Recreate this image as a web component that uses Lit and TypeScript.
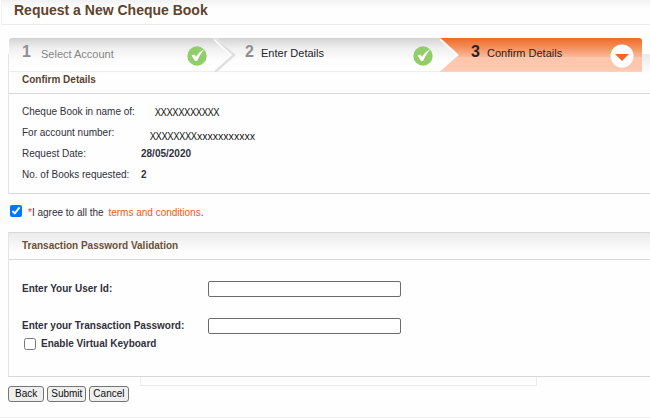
import { LitElement, html, css, svg } from "lit";
import { customElement, property, state } from "lit/decorators.js";

type StepState = "done" | "open" | "current";

@customElement("wizard-step")
class WizardStep extends LitElement {
  @property({ type: Number }) number = 1;
  @property() label = "";
  @property({ reflect: true }) status: StepState = "open";
  @property({ type: Boolean }) first = false;

  static styles = css`
    :host {
      display: flex;
      align-items: center;
      height: 34px;
      background: linear-gradient(#d2d2d2, #f0f0f0 30%, #fdfdfd 65%, #ffffff);
      box-shadow: inset 0 -1px #eeeeee;
      color: #24242c;
    }
    :host([status="done"]) {
      color: #868686;
      border-radius: 3px 0 0 0;
    }
    :host([status="current"]) {
      background: linear-gradient(#ef6a28, #f38f5c 28%, #f9b898 55%, #fdc6ac 57%, #fdc8ae 92%, #fbd5c4);
      border-radius: 0 3px 0 0;
      box-shadow: none;
    }
    .edge {
      flex: none;
      width: 22px;
      height: 34px;
    }
    .number {
      flex: none;
      width: 16px;
      margin: 0 0 6px 9px;
      font-size: 16px;
      line-height: 18px;
      font-weight: bold;
      color: #8f8f93;
    }
    .first {
      margin-left: 13px;
      width: 19px;
    }
    :host([status="current"]) .number {
      color: #2b2024;
    }
    .label {
      flex: 1;
      font-size: 11px;
      line-height: 14px;
      margin-bottom: 5px;
      white-space: nowrap;
    }
    .first + .label {
      margin-bottom: 3px;
    }
    .icon {
      flex: none;
      width: 24px;
      height: 24px;
      margin: 2px 5px 0 0;
    }
    :host([status="current"]) .icon {
      margin-right: 8px;
    }
  `;

  render() {
    const current = this.status === "current";
    const tail = current ? "#fefefe" : "#e0e0e0";
    return html`
      ${this.first
        ? ""
        : html`<svg class="edge" viewBox="0 0 22 34" aria-hidden="true">
            <defs>
              <linearGradient id="g" x2="0" y2="1">
                <stop offset="0" stop-color="#d2d2d2" />
                <stop offset=".3" stop-color="#f0f0f0" />
                <stop offset=".65" stop-color="#fdfdfd" />
                <stop offset="1" stop-color="#ffffff" />
              </linearGradient>
            </defs>
            <path d="M-2 0L18 17L-2 34Z" fill="url(#g)" />
            ${current
              ? svg`<path d="M-1 0L18 17L-1 34" fill="none" stroke=${tail} stroke-width="2" />
                  <path d="M0 0L19 17L0 34" fill="none" stroke="#d9a183" stroke-opacity=".5" />`
              : svg`<path d="M-1 -1L19 17L-1 35" fill="none" stroke="#fefefe" stroke-width="4" />
                  <path d="M0 -1L20 17L0 35" fill="none" stroke=${tail} stroke-width="2.500" />`}
          </svg>`}
      <span class="number ${this.first ? "first" : ""}">${this.number}</span>
      <span class="label">${this.label}</span>
      <svg class="icon" viewBox="0 0 24 24" aria-hidden="true">
        ${current
          ? svg`<circle cx="12" cy="12" r="11.5" fill="#fff" />
              <path d="M5 10H19L12 17Z" fill="#f0652a" />`
          : svg`<circle cx="12" cy="12" r="9.7" fill="#8fce68" />
              <path d="M6.5 11.5L9.5 10.5L11 13C13 9.500 16 6.500 19.500 5C16.500 8.500 14 12.500 12 17H10Z" fill="#fff" />`}
      </svg>
    `;
  }
}

@customElement("app-root")
class AppRoot extends LitElement {
  @state() private agreed = true;

  static styles = css`
    :host {
      display: block;
      overflow: hidden;
      background: #fefefe;
      color: #30303c;
      font: 10px/14px "Liberation Sans", Arial, sans-serif;
    }
    .page {
      border-bottom: 1px solid #ececec;
      padding-bottom: 15px;
    }
    .title {
      margin: 0 0 0 1px;
      padding: 1px 12px 5px;
      font-size: 14px;
      line-height: 18px;
      color: #60432c;
      background: linear-gradient(#f2f2f2, #fefefe 8px);
      border-bottom: 1px solid #ececec;
      border-left: 1px solid #f2f2f2;
    }
    .steps {
      position: relative;
      display: grid;
      grid-template-columns: 205fr 226fr 202fr;
      margin: 13px 8px -18px 9px;
    }
    .panel {
      margin-left: 8px;
      border: 1px solid #d8d8d8;
      border-right: 0;
      border-left-color: #e4e4e4;
    }
    .heading {
      margin: 0;
      padding: 6px 13px;
      font-size: 10px;
      line-height: 14px;
      color: #6b5136;
      background: linear-gradient(#ebebeb, #fefefe 20px);
      border-bottom: 1px solid #d8d8d8;
    }
    .under {
      border-top: 0;
    }
    .under .heading {
      padding: 19px 13px 6px;
      color: #5a4330;
    }
    .details {
      display: grid;
      grid-template-columns: 119px 1fr;
      grid-auto-rows: 21px;
      align-items: center;
      margin: 0;
      padding: 7px 13px 8px;
      white-space: nowrap;
    }
    .value {
      margin: 0;
      font-weight: bold;
    }
    .masked {
      padding-left: 14px;
      font: 10px/14px "Noto Sans", sans-serif;
      color: #101010;
      align-self: center;
    }
    .account {
      padding-left: 9px;
      align-self: end;
    }
    .agree {
      display: flex;
      align-items: center;
      gap: 6px;
      height: 38px;
      padding-left: 10px;
    }
    .box {
      width: 12px;
      height: 12px;
      margin: 0;
      flex: none;
    }
    .agree .box {
      accent-color: #0075ff;
      margin-bottom: 5px;
    }
    .star {
      color: #d83a3a;
    }
    .link {
      margin-left: 2px;
      color: #ea5b20;
      text-decoration: none;
    }
    .fields {
      display: grid;
      grid-template-columns: 186px minmax(0, 193px);
      align-items: center;
      row-gap: 21px;
      padding: 21px 13px 0;
      font-weight: bold;
      white-space: nowrap;
    }
    .input {
      box-sizing: border-box;
      width: 100%;
      height: 16px;
      padding: 0 3px;
      border: 1px solid #6c6c6c;
      border-radius: 2px;
      background: #ffffff;
      font: inherit;
    }
    .keyboard {
      display: flex;
      align-items: center;
      gap: 5px;
      padding: 3px 15px 25px;
      font-weight: bold;
    }
    .strip {
      width: 61%;
      height: 9px;
      box-sizing: border-box;
      margin-left: 140px;
      border: 1px solid #ececec;
      border-top: 0;
    }
    .actions {
      display: flex;
      gap: 3px;
      padding-left: 8px;
    }
    .button {
      box-sizing: border-box;
      height: 16px;
      padding: 0 6px;
      border: 1px solid #767676;
      border-radius: 3px;
      background: #efefef;
      color: #101010;
      font: 10px/14px "Liberation Sans", Arial, sans-serif;
    }
    .narrow {
      padding: 0 3px;
    }
  `;

  render() {
    return html`
      <main class="page">
        <h1 class="title">Request a New Cheque Book</h1>
        <div class="steps">
          <wizard-step first number="1" label="Select Account" status="done"></wizard-step>
          <wizard-step number="2" label="Enter Details" status="open"></wizard-step>
          <wizard-step number="3" label="Confirm Details" status="current"></wizard-step>
        </div>
        <section class="panel under">
          <h2 class="heading">Confirm Details</h2>
          <dl class="details">
            <dt>Cheque Book in name of:</dt>
            <dd class="value masked">XXXXXXXXXXX</dd>
            <dt>For account number:</dt>
            <dd class="value masked account">XXXXXXXXxxxxxxxxxxx</dd>
            <dt>Request Date:</dt>
            <dd class="value">28/05/2020</dd>
            <dt>No. of Books requested:</dt>
            <dd class="value">2</dd>
          </dl>
        </section>
        <div class="agree">
          <input class="box" id="agree" type="checkbox" .checked=${this.agreed}
            @change=${(e: Event) => (this.agreed = (e.target as HTMLInputElement).checked)} />
          <label for="agree"><span class="star">*</span>I agree to all the
            <a class="link" href="#terms">terms and conditions</a>.</label>
        </div>
        <section class="panel">
          <h2 class="heading">Transaction Password Validation</h2>
          <div class="fields">
            <label for="user">Enter Your User Id:</label>
            <input class="input" id="user" type="text" />
            <label for="password">Enter your Transaction Password:</label>
            <input class="input" id="password" type="password" />
          </div>
          <div class="keyboard">
            <input class="box" id="virtual" type="checkbox" />
            <label for="virtual">Enable Virtual Keyboard</label>
          </div>
        </section>
        <div class="strip"></div>
        <div class="actions">
          <button class="button" type="button">Back</button>
          <button class="button narrow" type="submit">Submit</button>
          <button class="button narrow" type="button">Cancel</button>
        </div>
      </main>
    `;
  }
}
